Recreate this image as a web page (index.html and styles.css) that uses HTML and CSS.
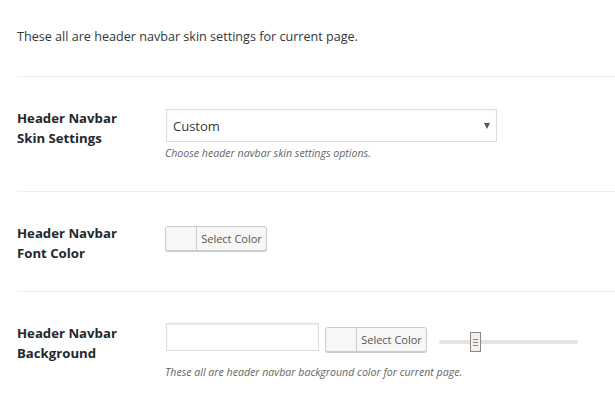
FILE: index.html
```html
<!DOCTYPE html>
<html>
<head>
	<meta charset="utf-8">
	<title>Header Navbar Skin</title>
	<link rel="stylesheet" href="styles.css">
</head>
<body>
	<div class="panel">
		<!-- intro line above the settings -->
		<p class="intro">These all are header navbar skin settings for current page.</p>

		<!-- skin select row -->
		<div class="row">
			<div class="label">Header Navbar<br>Skin Settings</div>
			<div class="field">
				<div class="select">
					<span>Custom</span>
					<span class="arrow"></span>
				</div>
				<p class="desc">Choose header navbar skin settings options.</p>
			</div>
		</div>

		<!-- font colour row -->
		<div class="row">
			<div class="label">Header Navbar<br>Font Color</div>
			<div class="field">
				<div class="inline">
					<div class="color-btn first">
						<span class="swatch"></span>
						<span class="btn-text">Select Color</span>
					</div>
				</div>
			</div>
		</div>

		<!-- background row -->
		<div class="row">
			<div class="label">Header Navbar<br>Background</div>
			<div class="field">
				<div class="inline">
					<div class="text-input"></div>
					<div class="color-btn">
						<span class="swatch"></span>
						<span class="btn-text">Select Color</span>
					</div>
					<div class="slider">
						<div class="track"></div>
						<div class="handle"><i></i><i></i><i></i></div>
					</div>
				</div>
				<p class="desc desc-bg">These all are header navbar background color for current page.</p>
			</div>
		</div>
	</div>
</body>
</html>
```

FILE: styles.css
```css
/* plain white admin page */
body {
	margin: 0;
	background-color: #fff;
	color: #32373c;
	font-family: "Open Sans", "Noto Sans", sans-serif;
	font-size: 13px;
}
.panel {
	padding-left: 17px;
}
/* intro sentence */
.intro {
	margin: 0;
	padding-top: 27px;
	font-size: 12.6px;
	line-height: 20px;
	height: 49px;
}
/* each setting is one row with a divider on top */
.row {
	display: flex;
	border-top: 1px solid #eee;
	padding: 31px 0 28px;
}
.label {
	width: 148px;
	flex-shrink: 0;
	font-weight: bold;
	font-size: 13.2px;
	line-height: 20px;
	color: #23282d;
}
.field {
	flex: 1;
}
/* fake select box */
.select {
	box-sizing: border-box;
	width: 331px;
	height: 33px;
	margin-top: 1px;
	margin-left: 1px;
	border: 1px solid #ddd;
	box-shadow: inset 0 1px 2px rgba(0, 0, 0, 0.05);
	display: flex;
	align-items: center;
	justify-content: space-between;
	padding: 0 6px 0 6px;
	color: #32373c;
}
.arrow {
	width: 0;
	height: 0;
	border-left: 3px solid transparent;
	border-right: 3px solid transparent;
	border-top: 6px solid #555;
	margin-right: 0;
}
/* small italic help text */
.desc {
	margin: 2px 0 0;
	font-size: 10.6px;
	line-height: 19px;
	font-style: italic;
	color: #666;
}
.desc-bg {
	margin-top: 11px;
}
.inline {
	display: flex;
	align-items: flex-start;
}
/* colour picker button: swatch + text */
.color-btn {
	box-sizing: border-box;
	display: flex;
	width: 102px;
	height: 25px;
	margin-top: 4px;
	margin-left: 6px;
	border: 1px solid #ccc;
	border-radius: 3px;
	background-color: #f7f7f7;
	box-shadow: 0 1px 0 #ccc;
	overflow: hidden;
}
.color-btn.first {
	margin-top: 3px;
	margin-left: 0;
}
.swatch {
	width: 30px;
	flex-shrink: 0;
	border-right: 1px solid #ccc;
	background-color: #f7f7f7;
}
.btn-text {
	flex: 1;
	text-align: center;
	font-size: 11px;
	line-height: 23px;
	color: #555;
	white-space: nowrap;
}
.text-input {
	box-sizing: border-box;
	width: 153px;
	height: 28px;
	margin-left: 1px;
	border: 1px solid #ddd;
	box-shadow: inset 0 1px 2px rgba(0, 0, 0, 0.07);
}
/* range slider */
.slider {
	position: relative;
	width: 139px;
	height: 20px;
	margin-left: 12px;
	margin-top: 9px;
}
.track {
	margin-top: 8px;
	height: 4px;
	background-color: #e6e3df;
	border-radius: 2px;
}
.handle {
	position: absolute;
	left: 31px;
	top: 0;
	box-sizing: border-box;
	width: 11px;
	height: 20px;
	border: 1px solid #8a8580;
	background-color: #f3f1ee;
	display: flex;
	flex-direction: column;
	align-items: center;
	justify-content: center;
	gap: 2px;
}
.handle i {
	display: block;
	width: 5px;
	height: 1px;
	background-color: #8a8580;
}
```
